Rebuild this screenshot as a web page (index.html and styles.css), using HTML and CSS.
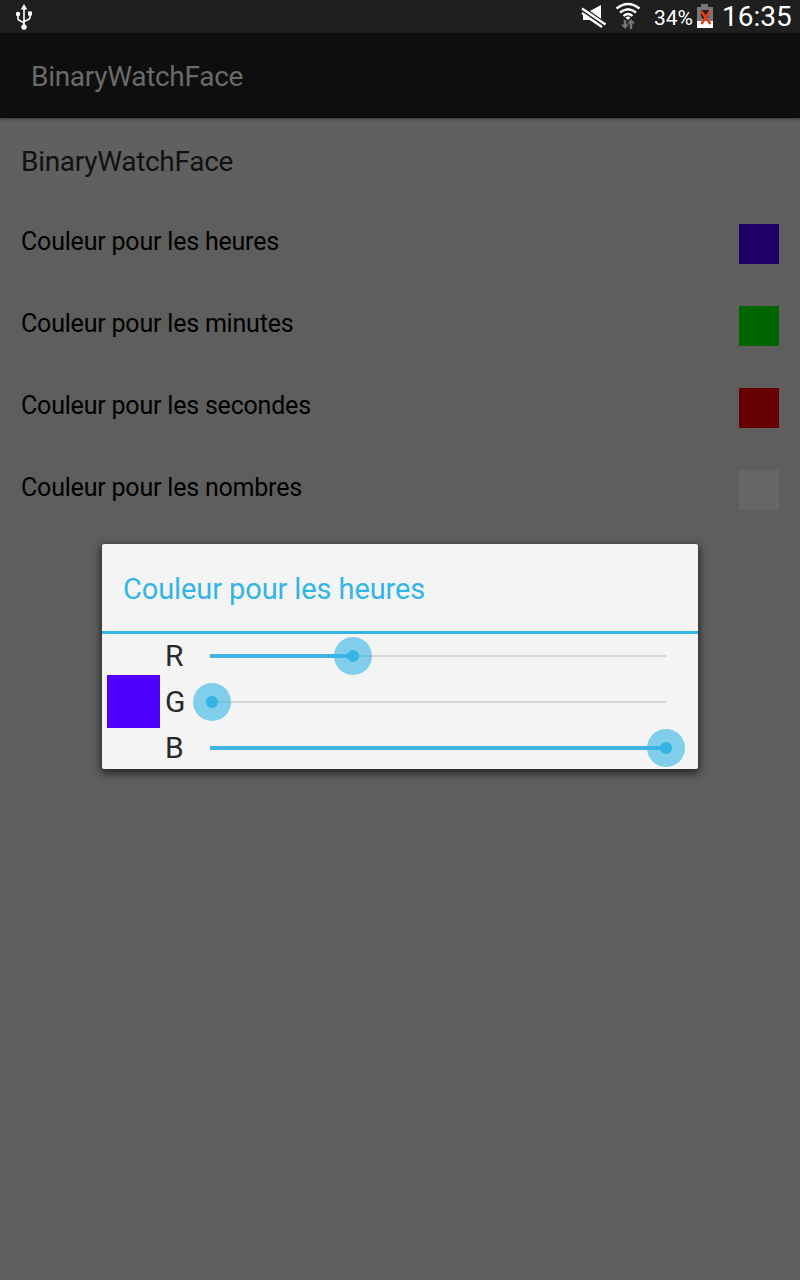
FILE: index.html
```html
<!DOCTYPE html>
<html lang="fr">
<head>
    <meta charset="UTF-8">
    <meta name="viewport" content="width=device-width, initial-scale=1.0">
    <title>BinaryWatchFace</title>
    <link rel="stylesheet" href="styles.css">
</head>
<body>

    <div class="status-bar">
        <svg class="usb" width="18" height="26" viewBox="0 0 18 26" fill="#fff" stroke="#fff">
            <path d="M9 4v19M3 10v4.500c0 3 6 2.500 6 5.500M15 10v3.500c0 3-6 2.500-6 5" fill="none" stroke-width="1.600"/>
            <path d="M9 0l3.300 5.500H5.700z" stroke="none"/>
            <circle cx="3" cy="10" r="2.200" stroke="none"/>
            <circle cx="9" cy="23" r="2.700" stroke="none"/>
            <path d="M13 7.500h4v4h-4z" stroke="none"/>
        </svg>
        <div class="status-right">
            <svg class="mute" width="26" height="24" viewBox="0 0 26 24">
                <path d="M2 7h7l11-6v20L9 16H2z" fill="#fff"/>
                <path d="M1 5.500l24 17" stroke="#1f1f1f" stroke-width="7"/>
                <path d="M1 4.500l23.500 16M1 9l20 14" stroke="#fff" stroke-width="2.400"/>
                <path d="M2 11.500l9 6.300-2-1.800H2z" fill="#fff"/>
            </svg>
            <svg class="wifi" width="26" height="28" viewBox="0 0 26 28" fill="none" stroke="#fff" stroke-width="2.300">
                <path d="M1.500 6.500q11.500-9 23 0M5 10.500q8-6.500 16 0M8.500 14q4.500-4 9 0"/>
                <path d="M10.500 15.500q2.500-2 5 0L13 18z" fill="#fff" stroke="none"/>
                <path d="M10 18v7M16 27v-7" stroke="#777" stroke-width="2.500"/>
                <path d="M6 22.500h8L10 27zM12 21.500h8L16 17z" fill="#777" stroke="none"/>
            </svg>
            <span class="percent">34%</span>
            <svg class="battery" width="16" height="24" viewBox="0 0 16 24">
                <path d="M4 0h7v3h5v21H0V3h4z" fill="#777"/>
                <path d="M0 17h16v7H0z" fill="#fff"/>
                <path d="M4 6h8v6l-2 3H6l-2-3z" fill="#222"/>
                <path d="M4 7l9.500 13M13 7L4.500 20" stroke="#e8401c" stroke-width="2.600"/>
            </svg>
            <span class="clock">16:35</span>
        </div>
    </div>

    <div class="action-bar">BinaryWatchFace</div>

    <div class="settings">
        <div class="settings-title">BinaryWatchFace</div>
        <div class="setting">
            <span>Couleur pour les heures</span>
            <div class="swatch hours"></div>
        </div>
        <div class="setting">
            <span>Couleur pour les minutes</span>
            <div class="swatch minutes"></div>
        </div>
        <div class="setting">
            <span>Couleur pour les secondes</span>
            <div class="swatch seconds"></div>
        </div>
        <div class="setting">
            <span>Couleur pour les nombres</span>
            <div class="swatch numbers"></div>
        </div>
    </div>

    <div class="dialog">
        <div class="dialog-title">Couleur pour les heures</div>
        <div class="picker">
            <div class="preview"></div>
            <div class="channels">
                <div class="channel">
                    <label>R</label>
                    <div class="slider">
                        <div class="fill" style="width: 31.4%"></div>
                        <div class="thumb" style="left: 31.4%"></div>
                    </div>
                </div>
                <div class="channel">
                    <label>G</label>
                    <div class="slider">
                        <div class="fill" style="width: 0%"></div>
                        <div class="thumb" style="left: 0.5%"></div>
                    </div>
                </div>
                <div class="channel">
                    <label>B</label>
                    <div class="slider">
                        <div class="fill" style="width: 100%"></div>
                        <div class="thumb" style="left: 99.9%"></div>
                    </div>
                </div>
            </div>
        </div>
    </div>

</body>
</html>
```

FILE: styles.css
```css
body {
    font-family: Roboto, sans-serif;
    margin: 0;
    height: 1280px;
    background-color: #5e5e5e;
    overflow: hidden;
}
.status-bar {
    display: flex;
    justify-content: space-between;
    height: 33px;
    padding: 0 9px 0 15px;
    background-color: #1f1f1f;
    color: #fff;
}
.usb {
    margin-top: 4px;
}
.status-right {
    display: flex;
    line-height: 33px;
}
.mute {
    margin: 4px 8px 0 0;
}
.wifi {
    margin: 2px 13px 0 0;
}
.percent {
    font-size: 21px;
    line-height: 36px;
    width: 43px;
}
.battery {
    margin: 4px 9px 0 0;
}
.clock {
    font-size: 28px;
    width: 69px;
}
.action-bar {
    height: 85px;
    padding-left: 31px;
    line-height: 87px;
    font-size: 28px;
    letter-spacing: -0.3px;
    color: #6a6a6a;
    background-color: #0e0e0e;
    box-shadow: 0 1px 3px rgba(0, 0, 0, 0.5);
    position: relative;
}
.settings-title {
    height: 85px;
    padding-left: 21px;
    line-height: 87px;
    font-size: 28px;
    letter-spacing: -0.3px;
    color: #111;
    background-color: #606060;
}
.setting {
    display: flex;
    justify-content: space-between;
    align-items: center;
    height: 82px;
    padding: 0 21px;
    font-size: 25px;
    letter-spacing: -0.2px;
    color: #000;
}
.setting span {
    padding-bottom: 6px;
}
.swatch {
    width: 40px;
    height: 40px;
}
.hours {
    background-color: #1f0066;
}
.minutes {
    background-color: #006600;
}
.seconds {
    background-color: #660000;
}
.numbers {
    background-color: #666;
}
.dialog {
    position: absolute;
    left: 102px;
    top: 544px;
    width: 596px;
    height: 225px;
    border-radius: 2px;
    background-color: #f4f4f4;
    box-shadow: 0 3px 9px 1px rgba(0, 0, 0, 0.65);
}
.dialog-title {
    height: 87px;
    padding-left: 21px;
    line-height: 90px;
    font-size: 29px;
    letter-spacing: -0.1px;
    color: #33b5e5;
    border-bottom: 3px solid #33b5e5;
}
.picker {
    display: flex;
    align-items: center;
    height: 135px;
    padding-left: 5px;
}
.preview {
    width: 53px;
    height: 53px;
    background-color: #5000ff;
}
.channels {
    flex: 1;
    display: grid;
    grid-template-rows: repeat(3, 46px);
    padding: 0 32px 0 5px;
}
.channel {
    display: flex;
    align-items: center;
}
.channel label {
    width: 45px;
    font-size: 30px;
    color: #2a2a2a;
}
.slider {
    position: relative;
    flex: 1;
    height: 2px;
    background-color: #d5d5d5;
}
.fill {
    position: absolute;
    top: -1px;
    height: 4px;
    background-color: #3fb4e2;
}
.thumb {
    position: absolute;
    top: 1px;
    width: 38px;
    height: 38px;
    border-radius: 50%;
    transform: translate(-50%, -50%);
    background: radial-gradient(circle, #33b5e5 5.5px, rgba(51, 181, 229, 0.6) 6.5px);
}
```
